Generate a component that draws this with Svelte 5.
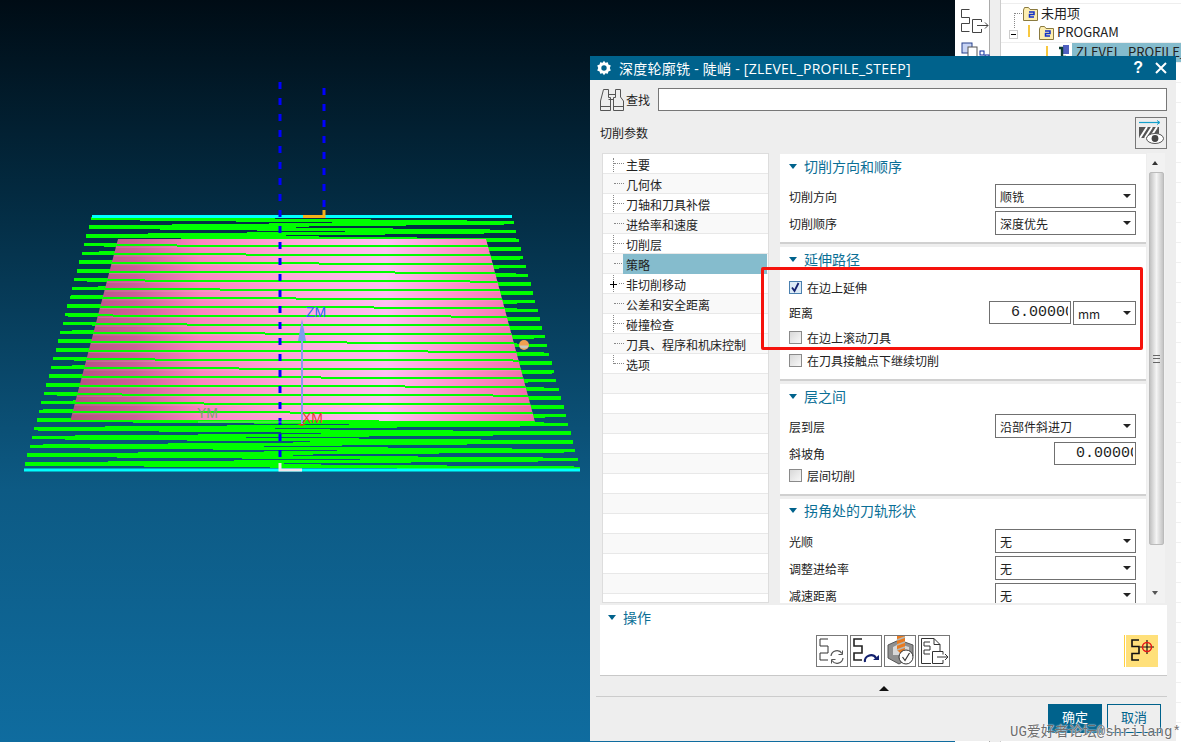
<script>
  const ROWS = 29;
  const rowGap = 8.77;
  const ptL = (i) => [91 - (66 * i) / (ROWS - 1), 218.3 + rowGap * i];
  const ptR = (i) => [514 + (66 * i) / (ROWS - 1), 222.7 + rowGap * i];

  let zig = [];
  for (let i = 0; i < ROWS; i++) {
    zig.push(ptL(i).join(','));
    zig.push(ptR(i).join(','));
  }
  const zigzag = zig.join(' ');
  const rows = Array.from({ length: ROWS }, (_, i) => ({ l: ptL(i), r: ptR(i) }));

  const treeItems = [
    '主要', '几何体', '刀轴和刀具补偿', '进给率和速度', '切削层', '策略',
    '非切削移动', '公差和安全距离', '碰撞检查', '刀具、程序和机床控制', '选项',
    '', '', '', '', '', '', '', '', '', '', '', ''
  ];
  const comb = 'M11 3H3V10H11V17H3V24H11';
</script>

{#snippet select(value, width = 141)}
  <div class="select" style="width:{width}px">
    <span>{value}</span>
    <i class="caret"></i>
  </div>
{/snippet}

{#snippet num(value)}
  <div class="num"><span>{value}</span></div>
{/snippet}

{#snippet check(label, checked = false)}
  <div class="check-row">
    <span class="box" class:on={checked}>
      {#if checked}
        <svg width="11" height="11" viewBox="0 0 11 11"><path d="M2 5.5L4.5 9L8.5 1" fill="none" stroke="#12206e" stroke-width="1.8" /></svg>
      {/if}
    </span>
    <span>{label}</span>
  </div>
{/snippet}

{#snippet head(title)}
  <div class="sec-head"><i class="tri"></i><span>{title}</span></div>
{/snippet}

<div class="screen">
  <!-- graphics window: the part sits on a free canvas -->
  <svg class="canvas" width="590" height="742" viewBox="0 0 590 742">
    <defs>
      <linearGradient id="pink" x1="0" x2="1" y1="0" y2="0">
        <stop offset="0" stop-color="#b0507f" />
        <stop offset="0.14" stop-color="#cc5f98" />
        <stop offset="0.28" stop-color="#fb84c0" />
        <stop offset="0.46" stop-color="#ffa4d8" />
        <stop offset="0.68" stop-color="#ffbff4" />
        <stop offset="0.84" stop-color="#ff8fca" />
        <stop offset="1" stop-color="#ee6aa6" />
      </linearGradient>
      <clipPath id="partClip"><polygon points="118,239 486,239 535,422 70,422" /></clipPath>
    </defs>
    <polyline points={zigzag} fill="none" stroke="#00ff00" stroke-width="3.4" shape-rendering="crispEdges" />
    <line x1="92" y1="216.5" x2="512" y2="216.5" stroke="#00ffff" stroke-width="3" />
    <line x1="24" y1="470" x2="580" y2="470" stroke="#00ffff" stroke-width="3" />
    <polygon points="118,239 486,239 535,422 70,422" fill="url(#pink)" />
    <g clip-path="url(#partClip)">
      {#each rows as r}
        <line x1={r.l[0]} y1={r.l[1] + 2.5} x2={r.r[0]} y2={r.r[1] - 1.5} stroke="#e0f0c0" stroke-opacity="0.22" stroke-width="1" />
        <line x1={r.l[0]} y1={r.l[1] + 0.6} x2={r.r[0]} y2={r.r[1] - 2.4} stroke="#00ff00" stroke-width="2" shape-rendering="crispEdges" />
      {/each}
    </g>
    <line x1="280" y1="82" x2="280" y2="462" stroke="#0000ff" stroke-width="3" stroke-dasharray="7 9" />
    <line x1="324" y1="88" x2="324" y2="210" stroke="#0000ff" stroke-width="3" stroke-dasharray="7 9" />
    <path d="M303 216.5H324V210" fill="none" stroke="#f5b21a" stroke-width="3" />
    <path d="M280 463V470H302" fill="none" stroke="#f4e6ea" stroke-width="3" />
    <line x1="302" y1="324" x2="302" y2="424" stroke="#8a9cf0" stroke-width="2" />
    <polygon points="302,319 298,341 306,341" fill="#7f9cf0" />
    <line x1="198" y1="422" x2="302" y2="422" stroke="#c8d0b8" stroke-opacity="0.6" stroke-width="1" />
    <path d="M297 424H306L302 426Z" fill="#e83020" />
    <circle cx="524" cy="345" r="5" fill="#f2a050" />
    <path d="M519.5 345.5H528.5A4.5 3 0 0 1 519.5 345.5Z" fill="#c8c8c0" />
    <text x="306" y="317" class="axis" fill="#2a68f4">ZM</text>
    <text x="302" y="423" class="axis" fill="#e83a3a">XM</text>
    <text x="197" y="418" class="axis" fill="#7fa070">YM</text>
  </svg>

  <!-- navigator window behind the dialog -->
  <div class="nav">
    <div class="nav-tools">
      <svg width="30" height="28" viewBox="0 0 30 28" fill="none" stroke="#444" stroke-width="1">
        <path d="M9.5 1.5H1.5V9.5H9.5V15.5H1.5V23.5H9.5" />
        <path d="M12.5 11.5H21.5V14M12.5 11.5V24.5H21.5V21M17 17.5H28M25 14.5L28 17.5L25 20.5" />
      </svg>
      <svg class="nav-tool2" width="30" height="18" viewBox="0 0 30 18">
        <rect x="1" y="1" width="10" height="10" fill="#c8d4f4" stroke="#26408c" />
        <rect x="7" y="5" width="9" height="12" fill="#fff" stroke="#555" />
        <rect x="19" y="9" width="4" height="4" fill="#fff" stroke="#0a2a9c" />
        <rect x="24" y="13" width="4" height="4" fill="#fff" stroke="#0a2a9c" />
      </svg>
    </div>
    <div class="nav-gutter"></div>
    <div class="nav-tree">
      <div class="nav-row first">
        <i class="dots-h"></i>
        <svg class="folder" width="15" height="14" viewBox="0 0 15 14"><path d="M.5 3V13.5H14.5V2.5H7L5.5 .5H1.5Z" fill="#fdeeb0" stroke="#8a7a40" /><path d="M6 5H11V7.5H6.5V10H11" fill="none" stroke="#1030c8" stroke-width="1.5" /></svg>
        <span>未用项</span>
      </div>
      <div class="nav-row second">
        <i class="minus"></i>
        <i class="warn"></i>
        <svg class="folder" width="15" height="14" viewBox="0 0 15 14"><path d="M.5 3V13.5H14.5V2.5H7L5.5 .5H1.5Z" fill="#fdeeb0" stroke="#8a7a40" /><path d="M6 5H11V7.5H6.5V10H11" fill="none" stroke="#1030c8" stroke-width="1.5" /></svg>
        <span>PROGRAM</span>
      </div>
      <div class="nav-row third">
        <i class="warn"></i>
        <svg class="tool" width="12" height="14" viewBox="0 0 12 14"><rect x="5" y="0" width="6" height="9" fill="#5060c0" /><path d="M1 3H4V12H8" fill="none" stroke="#0c3c34" stroke-width="2.4" /></svg>
        <span class="picked">ZLEVEL_PROFILE_STEEP</span>
      </div>
      {#each Array(36) as _}
        <div class="nav-row blank"></div>
      {/each}
    </div>
  </div>

  <div class="dialog">
    <div class="titlebar">
      <svg width="16" height="16" viewBox="0 0 16 16">
        <path d="M8 0.8L9.4 2.8L11.8 2.2L12.4 4.6L14.8 5.4L13.8 8L14.8 10.6L12.4 11.4L11.8 13.8L9.4 13.2L8 15.2L6.6 13.2L4.2 13.8L3.6 11.4L1.2 10.6L2.2 8L1.2 5.4L3.6 4.6L4.2 2.2L6.6 2.8Z" fill="#fff" />
        <circle cx="8" cy="8" r="2.7" fill="#00628c" />
      </svg>
      <span class="title-text">深度轮廓铣 - 陡峭 - [ZLEVEL_PROFILE_STEEP]</span>
      <span class="help">?</span>
      <svg class="close" width="12" height="12" viewBox="0 0 12 12"><path d="M1 1L11 11M11 1L1 11" stroke="#fff" stroke-width="2" /></svg>
    </div>

    <div class="body">
      <div class="search">
        <svg width="24" height="24" viewBox="0 0 24 24" fill="none" stroke="#555" stroke-width="1">
          <path d="M3.5 1.5H8.5V9.5H10.5V22.5H.5V13Z M.5 18.5H10.5" />
          <path d="M15.5 1.5H20.5V9L23.5 13V22.5H13.5V9.5H15.5Z M13.5 18.5H23.5" />
          <path d="M8.5 6.5H15.5M8.5 11.5H13.5" />
        </svg>
        <span class="find">查找</span>
        <div class="find-input"></div>
      </div>

      <div class="params">
        <span class="params-label">切削参数</span>
        <div class="view-btn">
          <svg width="28" height="28" viewBox="0 0 28 28">
            <path d="M2 3.5H22" stroke="#14a0cc" stroke-width="1.2" />
            <path d="M20 1.5L23 3.5L20 5.5" fill="none" stroke="#14a0cc" />
            <rect x="2" y="8" width="20" height="11" fill="#555" />
            <path d="M3 19L10 8M8 19L15 8M13 19L20 8" stroke="#fff" stroke-width="2" />
            <ellipse cx="18" cy="19.5" rx="8.5" ry="5" fill="#fff" stroke="#555" />
            <circle cx="18" cy="19.5" r="3.4" fill="#444" />
          </svg>
        </div>
      </div>

      <div class="main">
        <div class="tree">
          <i class="tree-spine"></i>
          {#each treeItems as item, i}
            <div class="tree-row" class:alt={i % 2 === 1}>
              {#if item}
                <i class="tick"></i>
                {#if item === '非切削移动'}<i class="plus"></i>{/if}
                <span class="tree-label" class:sel={item === '策略'}>{item}</span>
              {/if}
            </div>
          {/each}
        </div>

        <div class="settings">
          <div class="sections">
            <section class="s1">
              {@render head('切削方向和顺序')}
              <div class="row"><span>切削方向</span>{@render select('顺铣')}</div>
              <div class="row"><span>切削顺序</span>{@render select('深度优先')}</div>
            </section>
            <section class="s2">
              {@render head('延伸路径')}
              {@render check('在边上延伸', true)}
              <div class="row dist">
                <span>距离</span>
                <div class="pair">{@render num('6.00000')}{@render select('mm', 63)}</div>
              </div>
              {@render check('在边上滚动刀具')}
              {@render check('在刀具接触点下继续切削')}
            </section>
            <section class="s3">
              {@render head('层之间')}
              <div class="row"><span>层到层</span>{@render select('沿部件斜进刀')}</div>
              <div class="row"><span>斜坡角</span>{@render num('0.00000')}</div>
              {@render check('层间切削')}
            </section>
            <section class="s4">
              {@render head('拐角处的刀轨形状')}
              <div class="row"><span>光顺</span>{@render select('无')}</div>
              <div class="row"><span>调整进给率</span>{@render select('无')}</div>
              <div class="row"><span>减速距离</span>{@render select('无')}</div>
            </section>
          </div>
          <div class="scrollbar">
            <i class="sb-up"></i>
            <div class="thumb"><i class="grip"></i></div>
            <i class="sb-down"></i>
          </div>
        </div>
      </div>

      <div class="ops">
        <div class="sec-head"><i class="tri"></i><span>操作</span></div>
        <div class="op-row">
          <button class="op" aria-label="重新生成">
            <svg width="30" height="30" viewBox="0 0 30 30" fill="none" stroke="#333">
              <path d={comb} />
              <path d="M14 20A6 6 0 0 1 25 17.5M26 22A6 6 0 0 1 15 24.5" stroke="#555" stroke-width="1.2" />
              <path d="M25.5 14.5V18.5H21.5M14.5 27.5V23.5H18.5" stroke="#555" />
            </svg>
          </button>
          <button class="op" aria-label="重播">
            <svg width="30" height="30" viewBox="0 0 30 30" fill="none" stroke="#222" stroke-width="1.6">
              <path d={comb} />
              <path d="M14 26A6 5.5 0 0 1 25 22" stroke="#12206e" stroke-width="2.2" />
              <path d="M22 24H28V19Z" fill="#12206e" stroke="none" />
            </svg>
          </button>
          <button class="op" aria-label="确认">
            <svg width="30" height="30" viewBox="0 0 30 30">
              <path d="M3 9L14 4L28 9V20L14 28L3 22Z" fill="#8f8f8f" stroke="#555" />
              <path d="M8 11L14 8L24 11V19L8 19Z" fill="#d8d8d8" />
              <path d="M12 0H20V13L16 18L12 14Z" fill="#e87a20" />
              <path d="M12 4L20 1M12 9L20 6M12 14L20 11" stroke="#b8b8b0" stroke-width="1.6" />
              <circle cx="21" cy="21" r="7" fill="#fff" stroke="#333" />
              <path d="M17.5 21L20 24.5L24.5 17" fill="none" stroke="#333" stroke-width="1.2" />
            </svg>
          </button>
          <button class="op" aria-label="列表">
            <svg width="30" height="30" viewBox="0 0 30 30" fill="none" stroke="#333">
              <path d="M2.5 2.5H15L21 8.5V15M15 2.5V8.5H21M2.5 2.5V27.5H12" />
              <path d="M11 6H5V10H11V14H5V18H11" />
              <path d="M13.5 15.5H24V18.5M13.5 15.5V27.5H24V24M18 21H29M26 18L29 21L26 24" />
            </svg>
          </button>
          <span class="spacer"></span>
          <button class="op picked-op" aria-label="显示切削区域">
            <svg width="30" height="30" viewBox="0 0 30 30" fill="none">
              <path d="M12 4H5V10.5H12V17.5H5V24H12" stroke="#111" stroke-width="1.6" />
              <path d="M20 4V18M13 11H27" stroke="#111" stroke-width="1.2" />
              <circle cx="20" cy="11" r="4.5" stroke="#e81818" stroke-width="1.5" />
            </svg>
          </button>
        </div>
      </div>

      <div class="collapse"><i></i></div>

      <div class="footer">
        <button class="btn primary">确定</button>
        <button class="btn">取消</button>
      </div>
    </div>
  </div>

  <!-- annotation and forum watermark lie over the screenshot -->
  <div class="redbox"></div>
  <div class="watermark">UG爱好者论坛@shrilang*</div>
</div>

<style>
  :global(body) {
    margin: 0;
  }
  .screen {
    position: relative;
    width: 1181px;
    height: 742px;
    overflow: hidden;
    font: 12px "Noto Sans CJK SC", "Noto Sans", sans-serif;
    color: #222;
    background: linear-gradient(180deg, #000c15 0%, #032a40 26%, #0d5a84 66%, #0f6c9f 100%);
  }
  .canvas {
    position: absolute;
    left: 0;
    top: 0;
  }
  .axis {
    font: 14px "Liberation Sans", sans-serif;
  }

  /* navigator */
  .nav {
    position: absolute;
    left: 955px;
    top: 0;
    right: 0;
    bottom: 0;
    background: #fff;
    display: flex;
  }
  .nav-tools {
    width: 35px;
    padding: 8px 0 0 5px;
    box-sizing: border-box;
    border-right: 1px solid #aaa;
  }
  .nav-tool2 {
    display: block;
    margin-top: 3px;
    margin-left: 1px;
  }
  .nav-gutter {
    width: 10px;
    background: #eee;
    border-right: 1px solid #ccc;
  }
  .nav-tree {
    flex: 1;
    overflow: hidden;
    padding-top: 3px;
  }
  .nav-row {
    position: relative;
    height: 19px;
    font-size: 13px;
    border-top: 1px solid #eee;
    white-space: nowrap;
    line-height: 18px;
  }
  .nav-row.first span {
    position: absolute;
    left: 40px;
    top: 0;
  }
  .nav-row.first .folder {
    position: absolute;
    left: 22px;
    top: 3px;
  }
  .dots-h {
    position: absolute;
    left: 13px;
    top: 9px;
    width: 9px;
    height: 14px;
    border-left: 1px dotted #888;
    border-top: 1px dotted #888;
  }
  .nav-row.second {
    border-top: 0;
  }
  .nav-row.second span {
    position: absolute;
    left: 56px;
    top: 0;
  }
  .nav-row.second .folder {
    position: absolute;
    left: 38px;
    top: 3px;
  }
  .minus {
    position: absolute;
    left: 8px;
    top: 7px;
    width: 7px;
    height: 7px;
    border: 1px solid #ccc;
    background: linear-gradient(#000, #000) center / 5px 1px no-repeat #fff;
  }
  .warn {
    position: absolute;
    left: 27px;
    top: 2px;
    width: 2px;
    height: 12px;
    background: #f8c840;
  }
  .nav-row.third {
    border-top: 1px solid #eee;
    height: 19px;
  }
  .nav-row.third .warn {
    left: 45px;
    top: 3px;
  }
  .nav-row.third .tool {
    position: absolute;
    left: 57px;
    top: 2px;
  }
  .picked {
    position: absolute;
    left: 71px;
    top: 0;
    height: 19px;
    padding: 0 60px 0 4px;
    background: #85bccd;
  }
  .nav-row.blank {
    background: #fff;
    border-top: 1px solid #f0f0f0;
  }

  /* dialog */
  .dialog {
    position: absolute;
    left: 590px;
    top: 56px;
    width: 586px;
    height: 685px;
    background: #eee;
    display: flex;
    flex-direction: column;
  }
  .titlebar {
    flex: none;
    height: 24px;
    background: #00628c;
    color: #fff;
    display: flex;
    align-items: center;
    padding: 0 9px 0 6px;
    gap: 7px;
  }
  .title-text {
    flex: 1;
    font: 14px "Open Sans", "Noto Sans CJK SC", sans-serif;
    letter-spacing: 0.25px;
  }
  .help {
    font: bold 16px "Liberation Sans", sans-serif;
    margin-right: 5px;
  }
  .body {
    flex: 1;
    padding: 8px 9px 0 10px;
    display: flex;
    flex-direction: column;
    min-height: 0;
  }
  .search {
    display: flex;
    align-items: center;
    height: 23px;
    flex: none;
  }
  .find {
    margin: 0 8px 0 2px;
  }
  .find-input {
    flex: 1;
    height: 21px;
    background: #fff;
    border: 1px solid #777;
  }
  .params {
    flex: none;
    margin-top: 6px;
    height: 32px;
    display: flex;
    justify-content: space-between;
    align-items: center;
  }
  .params-label {
    margin-top: -2px;
  }
  .view-btn {
    width: 30px;
    height: 30px;
    border: 1px solid #777;
    display: flex;
    align-items: center;
    justify-content: center;
  }
  .main {
    flex: none;
    display: flex;
    gap: 11px;
    height: 450px;
    margin-top: 4px;
    margin-left: 2px;
  }
  .tree {
    position: relative;
    width: 167px;
    flex: none;
    box-sizing: border-box;
    background: #fff;
    border: 1px solid #ddd;
    overflow: hidden;
  }
  .tree-spine {
    position: absolute;
    left: 10px;
    top: 4px;
    height: 206px;
    border-left: 1px dotted #888;
  }
  .tree-row {
    position: relative;
    height: 19px;
    border-bottom: 1px solid #e8e8e8;
    line-height: 21px;
  }
  .tree-row.alt {
    background: #f9f9f9;
  }
  .tick {
    position: absolute;
    left: 11px;
    top: 9px;
    width: 10px;
    border-top: 1px dotted #888;
  }
  .plus {
    position: absolute;
    left: 6px;
    top: 6px;
    width: 9px;
    height: 9px;
    background:
      linear-gradient(#000, #000) center / 7px 1px no-repeat,
      linear-gradient(#000, #000) center / 1px 7px no-repeat,
      #fff;
  }
  .tree-label {
    position: absolute;
    left: 23px;
    top: 0;
    white-space: nowrap;
  }
  .tree-label.sel {
    left: 20px;
    width: 141px;
    padding-left: 3px;
    height: 20px;
    background: #85bccd;
  }
  .settings {
    flex: none;
    width: 385px;
    display: flex;
  }
  .sections {
    width: 366px;
    flex: none;
    overflow: hidden;
    display: flex;
    flex-direction: column;
    gap: 3px;
    padding-top: 1px;
    box-sizing: border-box;
  }
  section {
    flex: none;
    background: #fff;
    border-bottom: 2px solid #d0d0d0;
    padding: 0 10px 0 9px;
    box-sizing: border-box;
  }
  .s1 { height: 90px; }
  .s2 { height: 134px; }
  .s3 { height: 112px; }
  .s4 { height: 112px; border-bottom: 0; }
  .sec-head {
    display: flex;
    align-items: center;
    gap: 7px;
    height: 24px;
    font-size: 14px;
    color: #0b6f96;
  }
  .tri {
    width: 0;
    height: 0;
    border-left: 4.5px solid transparent;
    border-right: 4.5px solid transparent;
    border-top: 5px solid #00628c;
  }
  .row {
    display: flex;
    justify-content: space-between;
    align-items: center;
    height: 24px;
    margin-bottom: 3px;
  }
  .s1 .sec-head,
  .s3 .sec-head {
    margin-bottom: 6px;
  }
  .s2 .sec-head {
    margin-bottom: 4px;
  }
  .s4 .sec-head {
    height: 22px;
    margin-bottom: 8px;
  }
  .select {
    box-sizing: border-box;
    height: 24px;
    background: #fff;
    border: 1px solid #707070;
    display: flex;
    align-items: center;
    justify-content: space-between;
    padding: 0 2px 0 4px;
    flex: none;
  }
  .caret {
    width: 0;
    height: 0;
    margin-right: 2px;
    border-left: 4px solid transparent;
    border-right: 4px solid transparent;
    border-top: 4px solid #222;
  }
  .num {
    box-sizing: border-box;
    width: 82px;
    height: 23px;
    background: #fff;
    border: 1px solid #707070;
    padding: 0 2px 0 21px;
    font: 15px/22px "Liberation Mono", monospace;
  }
  .num span {
    display: block;
    overflow: hidden;
    white-space: nowrap;
  }
  .pair {
    display: flex;
    gap: 2px;
  }
  .dist {
    height: 25px;
    margin: 2px 0 -1px;
    align-items: flex-start;
  }
  .dist > span {
    line-height: 24px;
  }
  .check-row {
    display: flex;
    align-items: center;
    gap: 5px;
    height: 24px;
  }
  .s2 .check-row:last-child {
    margin-top: -1px;
  }
  .s3 .check-row {
    margin-top: -5px;
  }
  .box {
    width: 13px;
    height: 13px;
    box-sizing: border-box;
    border: 1px solid #8a8a8a;
    background: linear-gradient(135deg, #d8d8d8, #f8f8f8);
    display: flex;
    align-items: center;
    justify-content: center;
  }
  .box.on {
    border-color: #4a80b0;
    background: #dceaf6;
  }
  .scrollbar {
    position: relative;
    flex: 1;
    margin-left: 1px;
    background: #f2f2f2;
    display: flex;
    flex-direction: column;
    align-items: center;
  }
  .sb-up, .sb-down {
    position: absolute;
    left: 5px;
    width: 0;
    height: 0;
    border-left: 3.5px solid transparent;
    border-right: 3.5px solid transparent;
  }
  .sb-up {
    top: 8px;
    border-bottom: 4px solid #333;
  }
  .sb-down {
    bottom: 8px;
    border-top: 4px solid #555;
  }
  .thumb {
    margin-top: 19px;
    width: 15px;
    height: 373px;
    box-sizing: border-box;
    border: 1px solid #bbb;
    border-radius: 2px;
    background: linear-gradient(90deg, #c2c2c2, #f4f4f4 50%, #c4c4c4);
    display: flex;
    align-items: center;
    justify-content: center;
  }
  .grip {
    width: 7px;
    height: 6px;
    border-top: 1px solid #666;
    border-bottom: 1px solid #666;
    background: linear-gradient(#666, #666) center / 7px 1px no-repeat;
  }
  .ops {
    flex: none;
    margin-top: 2px;
    height: 71px;
    box-sizing: border-box;
    background: #fff;
    border-bottom: 1px solid #c8c8c8;
    padding: 0 9px 0 8px;
  }
  .op-row {
    display: flex;
    gap: 2px;
    margin-top: 6px;
    padding-left: 208px;
  }
  .op {
    width: 32px;
    height: 32px;
    padding: 0;
    background: #fff;
    border: 1px solid #777;
    display: flex;
    align-items: center;
    justify-content: center;
  }
  .spacer {
    width: 172px;
  }
  .picked-op {
    width: 34px;
    background: linear-gradient(90deg, #fff 1px, #ffe07a 1px);
    border: 0;
    border-left: 1px solid #ffd040;
  }
  .collapse {
    flex: none;
    height: 20px;
    margin-left: -4px;
    border-bottom: 1px solid #ccc;
    position: relative;
  }
  .collapse i {
    position: absolute;
    left: 283px;
    top: 10px;
    width: 0;
    height: 0;
    border-left: 5px solid transparent;
    border-right: 5px solid transparent;
    border-bottom: 5px solid #111;
  }
  .footer {
    flex: none;
    margin-top: 7px;
    display: flex;
    justify-content: flex-end;
    gap: 5px;
    padding-right: 6px;
  }
  .btn {
    width: 54px;
    height: 29px;
    box-sizing: border-box;
    padding: 0 0 4px;
    background: #eee;
    color: #00628c;
    border: 1px solid #00628c;
    font: 13px "Noto Sans CJK SC", sans-serif;
  }
  .btn.primary {
    background: #00628c;
    color: #fff;
  }
  .redbox {
    position: absolute;
    left: 761px;
    top: 267px;
    width: 382px;
    height: 83px;
    box-sizing: border-box;
    border: 3px solid #f5120c;
    border-radius: 2px;
  }
  .watermark {
    position: absolute;
    left: 1010px;
    top: 720px;
    white-space: nowrap;
    font: 14px "Liberation Mono", "Noto Sans CJK SC", monospace;
    color: #6e6e6e;
    text-shadow: 0 0 1px #fff, 0 0 2px #fff;
  }
</style>
